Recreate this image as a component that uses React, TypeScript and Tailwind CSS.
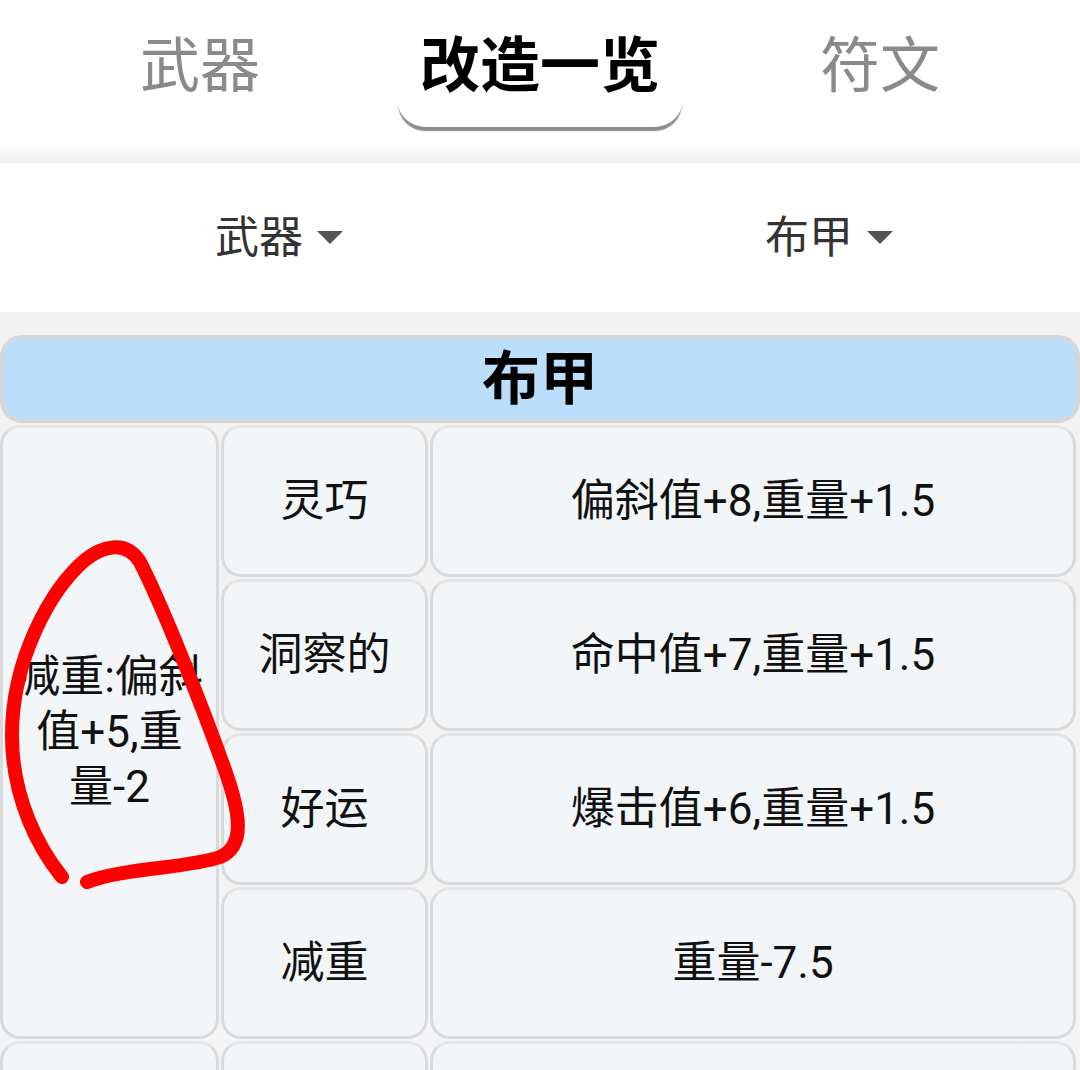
import React from 'react';

const font = "font-['Roboto','Noto_Sans_CJK_SC',sans-serif]";

const tabs = [
  { id: 'weapon', label: '武器' },
  { id: 'mods', label: '改造一览' },
  { id: 'rune', label: '符文' },
];

const groups = [
  {
    title: '减重:偏斜值+5,重量-2',
    rows: [
      { name: '灵巧', effect: '偏斜值+8,重量+1.5' },
      { name: '洞察的', effect: '命中值+7,重量+1.5' },
      { name: '好运', effect: '爆击值+6,重量+1.5' },
      { name: '减重', effect: '重量-7.5' },
    ],
  },
  {
    title: '',
    rows: [
      { name: '', effect: '' },
      { name: '', effect: '' },
    ],
  },
];

const cell =
  'flex items-center justify-center text-center bg-[#f3f6f9] border-[3px] border-[#dadada] border-t-[#e4e4e4] rounded-[20px] text-[44px] leading-[55px] text-[#111]';

const Caret = () => (
  <svg width="26" height="13" viewBox="0 0 26 13" className="ml-[14px]">
    <polygon points="0,0 26,0 13,13" fill="#555" />
  </svg>
);

export default function App() {
  const currentTab = 'mods';

  return (
    <div className={`relative h-[1070px] w-[1080px] overflow-hidden bg-[#f4f5f7] ${font}`}>
      {/* TABS */}
      <div className="h-[163px] flex justify-center gap-[54px] bg-gradient-to-b from-white from-[88%] to-[#efefef]">
        {tabs.map((t) => {
          const active = t.id === currentTab;
          return (
            <div
              key={t.id}
              className={`w-[286px] h-[127px] pt-[6px] flex items-center justify-center text-[60px] rounded-b-[28px] ${
                active
                  ? 'bg-white font-bold text-black shadow-[0_5px_1px_-1px_rgba(0,0,0,0.45)]'
                  : 'text-[#8a8a8a]'
              }`}
            >
              {t.label}
            </div>
          );
        })}
      </div>

      {/* FILTERS */}
      <div className="h-[149px] bg-white flex text-[44px] text-[#333]">
        <div className="flex-1 flex items-center justify-center pl-[28px]">
          <span>武器</span>
          <Caret />
        </div>
        <div className="flex-1 flex items-center justify-center pl-[48px]">
          <span>布甲</span>
          <Caret />
        </div>
      </div>

      <div className="pt-[23px] bg-gradient-to-b from-[#f2f2f2] to-[#f5f6f8]">
        {/* SECTION HEADER */}
        <div className="h-[88px] flex items-center justify-center bg-[#bbdefb] border-4 border-[#d6d6d6] rounded-[22px] text-[58px] font-bold text-black">
          布甲
        </div>

        {/* TABLE */}
        <div className="mt-[2px] grid grid-cols-[219px_207px_646px] auto-rows-[152px] gap-[2px]">
          {groups.map((g, gi) => (
            <React.Fragment key={gi}>
              <div className={`${cell} overflow-hidden`} style={{ gridRow: `span ${g.rows.length}` }}>
                <span className="w-[190px] shrink-0">{g.title}</span>
              </div>
              {g.rows.map((r, ri) => (
                <React.Fragment key={ri}>
                  <div className={`${cell} col-start-2`}>{r.name}</div>
                  <div className={cell}>{r.effect}</div>
                </React.Fragment>
              ))}
            </React.Fragment>
          ))}
        </div>
      </div>

      {/* red hand-drawn annotation */}
      <svg
        className="absolute left-0 top-0 pointer-events-none"
        width="1080"
        height="1070"
        viewBox="0 0 1080 1070"
      >
        <path
          d="M62 877 C 40 850, 12 800, 12 735 C 12 660, 50 590, 85 560 C 100 548, 125 538, 140 562 C 162 605, 200 700, 225 770 C 240 812, 246 846, 220 857 C 190 868, 122 868, 87 882"
          fill="none"
          stroke="#ff0000"
          strokeWidth="14"
          strokeLinecap="round"
          strokeLinejoin="round"
        />
      </svg>
    </div>
  );
}
